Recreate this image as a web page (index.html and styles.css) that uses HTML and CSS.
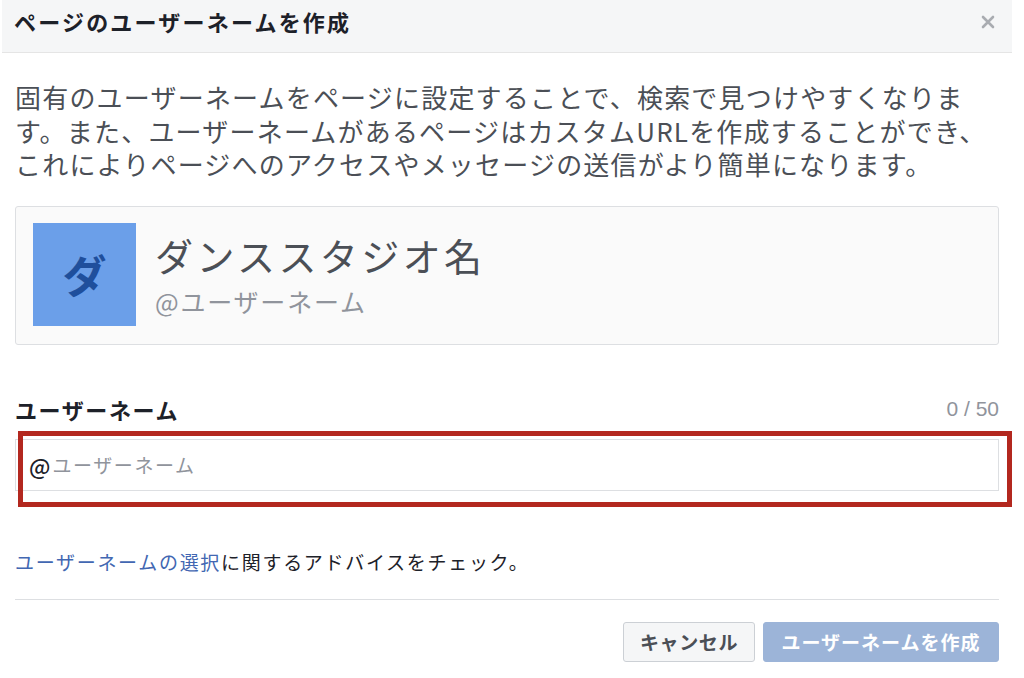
FILE: index.html
```html
<!DOCTYPE html>
<html lang="ja">
<head>
<meta charset="utf-8">
<title>ページのユーザーネームを作成</title>
<link rel="stylesheet" href="styles.css">
</head>
<body>
<div class="dialog">
  <div class="dialog-header">
    <h1 class="dialog-title">ページのユーザーネームを作成</h1>
    <button class="close" aria-label="閉じる">
      <svg width="14" height="14" viewBox="0 0 14 14"><path d="M2 2 L12 12 M12 2 L2 12" stroke="#a9acb1" stroke-width="2.6" stroke-linecap="round" fill="none"/></svg>
    </button>
  </div>
  <div class="dialog-body">
    <p class="intro">固有のユーザーネームをページに設定することで、検索で見つけやすくなりま<br>す。また、ユーザーネームがあるページはカスタムURLを作成することができ、<br>これによりページへのアクセスやメッセージの送信がより簡単になります。</p>

    <div class="preview">
      <div class="avatar">ダ</div>
      <div class="preview-text">
        <div class="preview-name">ダンススタジオ名</div>
        <div class="preview-handle">@ユーザーネーム</div>
      </div>
    </div>

    <div class="field-head">
      <span class="field-label">ユーザーネーム</span>
      <span class="counter">0 / 50</span>
    </div>
    <div class="input-wrap">
      <div class="input">
        <span class="at">@</span><span class="placeholder">ユーザーネーム</span>
      </div>
      <div class="highlight"></div>
    </div>

    <p class="advice"><a href="#" class="link">ユーザーネームの選択</a>に関するアドバイスをチェック。</p>

    <div class="divider"></div>

    <div class="actions">
      <button class="btn btn-cancel">キャンセル</button>
      <button class="btn btn-primary">ユーザーネームを作成</button>
    </div>
  </div>
</div>
</body>
</html>
```

FILE: styles.css
```css
* { box-sizing: border-box; }

html, body {
  margin: 0;
  padding: 0;
  background: #ffffff;
}

body {
  font-family: "Noto Sans CJK JP", "Noto Sans", sans-serif;
  color: #1d2129;
}

.dialog {
  width: 1010px;
  margin-left: 2px;
}

.dialog-header {
  height: 53px;
  background: #f5f6f7;
  border-bottom: 1px solid #e5e5e5;
  display: flex;
  align-items: flex-start;
  justify-content: space-between;
  padding: 0 17px 0 12px;
}

.dialog-title {
  margin: 0;
  font-size: 22px;
  font-weight: 700;
  letter-spacing: 2.2px;
  line-height: 42px;
  color: #1d2129;
}

.close {
  border: 0;
  background: transparent;
  padding: 0;
  margin-top: 15px;
  width: 14px;
  height: 14px;
  display: flex;
}

.dialog-body {
  padding: 0 13px 0 13px;
}

.intro {
  margin: 27px 0 0 0;
  font-size: 26px;
  letter-spacing: 1.2px;
  line-height: 33.5px;
  color: #4b4f56;
  white-space: nowrap;
}

.preview {
  margin-top: 25px;
  border: 1px solid #dddfe2;
  border-radius: 3px;
  background: #fafafa;
  padding: 16px 17px 18px 17px;
  display: flex;
  align-items: center;
  gap: 19px;
}

.avatar {
  width: 103px;
  height: 103px;
  background: #6b9fe9;
  color: #1f4f9c;
  font-size: 44px;
  font-weight: 700;
  display: flex;
  align-items: center;
  justify-content: center;
}

.preview-text {
  display: flex;
  flex-direction: column;
  gap: 6px;
  margin-top: 2px;
}

.preview-name {
  font-size: 38px;
  letter-spacing: 3.4px;
  line-height: 46px;
  color: #4b4f56;
}

.preview-handle {
  font-size: 25px;
  letter-spacing: 1.8px;
  line-height: 34px;
  color: #90949c;
}

.field-head {
  margin-top: 50px;
  display: flex;
  justify-content: space-between;
  align-items: center;
  line-height: 28px;
}

.field-label {
  font-size: 22px;
  font-weight: 700;
  letter-spacing: 1.6px;
  color: #1d2129;
}

.counter {
  font-family: "Liberation Sans", Arial, sans-serif;
  font-size: 21px;
  color: #90949c;
}

.input-wrap {
  position: relative;
  margin-top: 16px;
}

.input {
  height: 52px;
  border: 1px solid #dddfe2;
  background: #fff;
  display: flex;
  align-items: center;
  padding-left: 13px;
}

.at {
  font-size: 22px;
  font-weight: 500;
  color: #1d2129;
  margin-right: 2px;
}

.placeholder {
  font-size: 19px;
  letter-spacing: 1.6px;
  color: #90949c;
}

.highlight {
  position: absolute;
  left: 3px;
  top: -8px;
  width: 994px;
  height: 76px;
  border: 5px solid #b3281f;
  pointer-events: none;
}

.advice {
  margin: 57px 0 0 0;
  font-size: 19px;
  letter-spacing: 1.7px;
  line-height: 28px;
  color: #1d2129;
}

.link {
  color: #4267b2;
  text-decoration: none;
}

.divider {
  margin-top: 23px;
  height: 1px;
  background: #dddfe2;
}

.actions {
  margin-top: 22px;
  display: flex;
  justify-content: flex-end;
  gap: 8px;
}

.btn {
  height: 40px;
  border-radius: 3px;
  font-family: "Noto Sans CJK JP", sans-serif;
  font-size: 19px;
  font-weight: 700;
  padding: 0 16px;
  line-height: 1;
}

.btn-cancel {
  width: 132px;
  background: #f5f6f7;
  border: 1px solid #ccd0d5;
  color: #4b4f56;
  letter-spacing: 0.6px;
}

.btn-primary {
  width: 236px;
  background: #9cb4d8;
  border: 1px solid #9cb4d8;
  color: #ffffff;
  letter-spacing: 1px;
}
```
